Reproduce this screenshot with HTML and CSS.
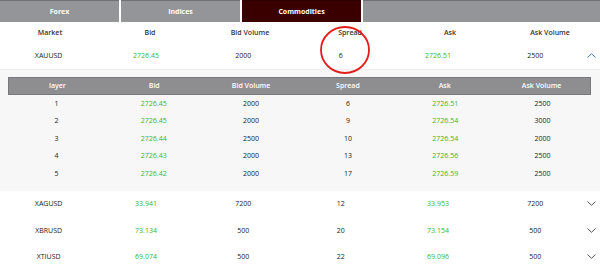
FILE: index.html
```html
<!DOCTYPE html>
<html>
<head>
<meta charset="utf-8">
<link rel="stylesheet" href="styles.css">
</head>
<body>
<div class="page">
  <div class="tabs">
    <div class="tab">Forex</div>
    <div class="tab">Indices</div>
    <div class="tab active">Commodities</div>
    <div class="tab-fill"></div>
  </div>
  <div class="thead">
    <div>Market</div><div>Bid</div><div>Bid Volume</div><div>Spread</div><div>Ask</div><div>Ask Volume</div>
  </div>
  <div class="row open">
    <div>XAUUSD</div><div class="g">2726.45</div><div>2000</div><div>6</div><div class="g">2726.51</div><div>2500</div>
    <div class="chev"><svg width="9" height="5" viewBox="0 0 9 5"><path d="M0.5 4.5 L4.5 0.7 L8.5 4.5" fill="none" stroke="#3b7fd6" stroke-width="1"/></svg></div>
  </div>
  <div class="detail">
    <div class="sub">
      <div class="subhead"><div>layer</div><div>Bid</div><div>Bid Volume</div><div>Spread</div><div>Ask</div><div>Ask Volume</div></div>
      <div class="subrow"><div>1</div><div class="g">2726.45</div><div>2000</div><div>6</div><div class="g">2726.51</div><div>2500</div></div>
      <div class="subrow"><div>2</div><div class="g">2726.45</div><div>2000</div><div>9</div><div class="g">2726.54</div><div>3000</div></div>
      <div class="subrow"><div>3</div><div class="g">2726.44</div><div>2500</div><div>10</div><div class="g">2726.54</div><div>2000</div></div>
      <div class="subrow"><div>4</div><div class="g">2726.43</div><div>2000</div><div>13</div><div class="g">2726.56</div><div>2500</div></div>
      <div class="subrow"><div>5</div><div class="g">2726.42</div><div>2000</div><div>17</div><div class="g">2726.59</div><div>2500</div></div>
    </div>
  </div>
  <div class="row">
    <div>XAGUSD</div><div class="g">33.941</div><div>7200</div><div>12</div><div class="g">33.953</div><div>7200</div>
    <div class="chev"><svg width="9" height="5" viewBox="0 0 9 5"><path d="M0.5 0.5 L4.5 4.3 L8.5 0.5" fill="none" stroke="#555" stroke-width="1"/></svg></div>
  </div>
  <div class="row">
    <div>XBRUSD</div><div class="g">73.134</div><div>500</div><div>20</div><div class="g">73.154</div><div>500</div>
    <div class="chev"><svg width="9" height="5" viewBox="0 0 9 5"><path d="M0.5 0.5 L4.5 4.3 L8.5 0.5" fill="none" stroke="#555" stroke-width="1"/></svg></div>
  </div>
  <div class="row">
    <div>XTIUSD</div><div class="g">69.074</div><div>500</div><div>22</div><div class="g">69.096</div><div>500</div>
    <div class="chev"><svg width="9" height="5" viewBox="0 0 9 5"><path d="M0.5 0.5 L4.5 4.3 L8.5 0.5" fill="none" stroke="#555" stroke-width="1"/></svg></div>
  </div>
  <svg class="mark" width="54" height="52" viewBox="0 0 54 52"><ellipse cx="27" cy="26" rx="24" ry="23" fill="none" stroke="#e21b1b" stroke-width="1.8"/></svg>
</div>
</body>
</html>
```

FILE: styles.css
```css
* { box-sizing: border-box; }
html, body { margin: 0; padding: 0; background: #fff; }
body {
  font-family: "Open Sans", "Noto Sans", sans-serif;
  font-size: 7px;
  color: #222;
}
.page { position: relative; width: 600px; height: 276px; overflow: hidden; }

.tabs { display: flex; gap: 2px; height: 22px; }
.tab {
  width: 119px;
  background: #939598;
  border-top: 1px solid #6f7073;
  color: #fff;
  font-weight: 700;
  display: flex; align-items: center; justify-content: center;
}
.tab.active { background: #3a0000; border-top-color: #2a0000; }
.tab-fill { flex: 1; background: #939598; border-top: 1px solid #6f7073; }

.thead {
  display: grid;
  grid-template-columns: repeat(6, 100px);
  height: 21px;
  align-items: center;
  text-align: center;
  font-weight: 600;
  color: #333;
}

.row {
  display: grid;
  grid-template-columns: repeat(6, 97.33px) 16px;
  height: 26.5px;
  align-items: center;
  text-align: center;
}
.row.open { border-bottom: 1px solid #eeeeee; }
.chev { display: flex; justify-content: center; align-items: center; }
.chev svg { display: block; }

.g { color: #44b512; }

.detail { background: #f7f7f7; padding: 7px 9px 8px 8px; height: 121px; }
.subhead {
  display: grid;
  grid-template-columns: repeat(6, 1fr);
  height: 18px;
  align-items: center;
  text-align: center;
  background: #8e8e90;
  border: 1px solid #77787a;
  color: #fff;
  font-weight: 600;
}
.subrow {
  display: grid;
  grid-template-columns: repeat(6, 1fr);
  height: 17.5px;
  align-items: center;
  text-align: center;
}

.mark { position: absolute; left: 318px; top: 24px; }
```
